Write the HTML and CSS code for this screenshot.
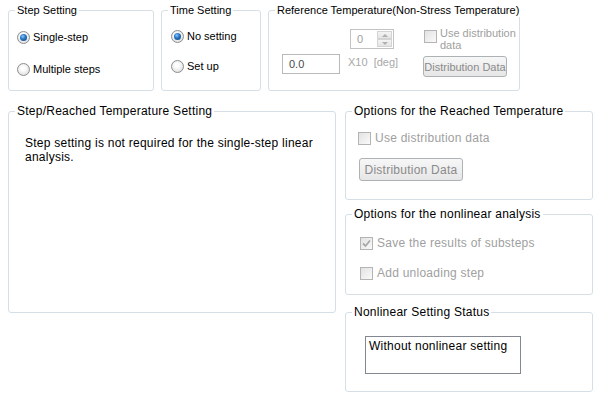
FILE: index.html
```html
<!DOCTYPE html>
<html lang="en">
<head>
    <meta charset="UTF-8">
    <meta name="viewport" content="width=device-width, initial-scale=1.0">
    <title>Thermal Stress Setting</title>
    <link rel="stylesheet" href="styles.css">
</head>
<body>
    <div class="top">
        <fieldset class="group step-box">
            <legend>Step Setting</legend>
            <div class="inner">
                <label class="opt"><span class="radio on"></span>Single-step</label>
                <label class="opt second"><span class="radio"></span>Multiple steps</label>
            </div>
        </fieldset>

        <fieldset class="group time-box">
            <legend>Time Setting</legend>
            <div class="inner">
                <label class="opt"><span class="radio on"></span>No setting</label>
                <label class="opt second"><span class="radio"></span>Set up</label>
            </div>
        </fieldset>

        <fieldset class="group ref-box">
            <legend>Reference Temperature(Non-Stress Temperature)</legend>
            <div class="inner ref-grid">
                <div></div>
                <div class="spin">
                    <span class="spin-val">0</span>
                    <span class="spin-btns">
                        <span class="spin-up"></span>
                        <span class="spin-down"></span>
                    </span>
                </div>
                <label class="opt dis top-check"><span class="check"></span><span>Use distribution<br>data</span></label>

                <div class="textbox">0.0</div>
                <div class="unit">X10&nbsp;&nbsp;[deg]</div>
                <button class="btn small" disabled>Distribution Data</button>
            </div>
        </fieldset>
    </div>

    <div class="bottom">
        <fieldset class="group big reached-box">
            <legend>Step/Reached Temperature Setting</legend>
            <div class="inner">
                <p class="note">Step setting is not required for the single-step linear analysis.</p>
            </div>
        </fieldset>

        <div class="side">
            <fieldset class="group big opt-reached">
                <legend>Options for the Reached Temperature</legend>
                <div class="inner">
                    <label class="opt dis"><span class="check"></span>Use distribution data</label>
                    <button class="btn wide" disabled>Distribution Data</button>
                </div>
            </fieldset>

            <fieldset class="group big opt-nonlin">
                <legend>Options for the nonlinear analysis</legend>
                <div class="inner">
                    <label class="opt dis"><span class="check">
                        <svg width="11" height="11" viewBox="0 0 11 11"><path d="M2 5.5 L4.5 8 L9 2.5" fill="none" stroke="#a8a8a8" stroke-width="1.8"/></svg>
                    </span>Save the results of substeps</label>
                    <label class="opt dis second"><span class="check"></span>Add unloading step</label>
                </div>
            </fieldset>

            <fieldset class="group big status-box">
                <legend>Nonlinear Setting Status</legend>
                <div class="inner">
                    <div class="status">Without nonlinear setting</div>
                </div>
            </fieldset>
        </div>
    </div>
</body>
</html>
```

FILE: styles.css
```css
body{
    margin: 0;
    background: #ffffff;
    font-family: "Liberation Sans", Arial, sans-serif;
    font-size: 11px;
    color: #000000;
}

.group{
    box-sizing: border-box;
    margin: 0;
    padding: 0;
    border: 1px solid #d5dfe5;
    border-radius: 3px;
    min-width: 0;
}
.group legend{
    margin-left: 6px;
    padding: 0 2px;
    line-height: 14px;
    white-space: nowrap;
}
.group.big{
    font-size: 12px;
    letter-spacing: 0.25px;
}

.top{
    display: flex;
    gap: 7px;
    padding: 3px 0 0 8px;
}
.step-box{
    width: 146px;
    height: 88px;
}
.step-box .inner{
    padding: 13px 0 0 8px;
}
.time-box{
    width: 100px;
    height: 88px;
}
.time-box .inner{
    padding: 12px 0 0 9px;
}
.ref-box{
    width: 252px;
    height: 88px;
}
.ref-box .inner{
    padding: 12px 0 0 13px;
}

.opt{
    display: flex;
    align-items: center;
    gap: 3px;
    height: 14px;
    line-height: 14px;
    white-space: nowrap;
}
.step-box .second{
    margin-top: 18px;
}
.time-box .second{
    margin-top: 16px;
}
.dis{
    color: #a0a0a0;
    gap: 4px;
}

.radio{
    box-sizing: border-box;
    flex: none;
    width: 13px;
    height: 13px;
    border: 1px solid #8b8d8f;
    border-radius: 50%;
    background: radial-gradient(circle at 45% 40%, #ffffff 20%, #d3d3d3 100%);
    display: flex;
    align-items: center;
    justify-content: center;
}
.radio.on::after{
    content: "";
    width: 7px;
    height: 7px;
    border-radius: 50%;
    background: radial-gradient(circle at 40% 35%, #8cc8ff 0%, #2a78c8 40%, #0b3c73 100%);
}

.check{
    box-sizing: border-box;
    flex: none;
    width: 13px;
    height: 13px;
    border: 1px solid #b4b4b4;
    background: linear-gradient(135deg, #e2e2e2, #fafafa);
    display: flex;
    align-items: center;
    justify-content: center;
}

/* reference temperature */
.ref-grid{
    display: grid;
    grid-template-columns: 66px 75px 84px;
    grid-template-rows: 20px 23px;
    row-gap: 5px;
}
.spin{
    box-sizing: border-box;
    width: 44px;
    height: 20px;
    margin-left: 2px;
    border: 1px solid #c2c2c2;
    display: flex;
    align-items: center;
    justify-content: space-between;
    padding: 0 1px 0 6px;
    color: #a0a0a0;
}
.spin-btns{
    display: flex;
    flex-direction: column;
    width: 15px;
    height: 16px;
}
.spin-up,
.spin-down{
    flex: 1;
    box-sizing: border-box;
    border: 1px solid #d4d4d4;
    background: linear-gradient(#f4f4f4, #e4e4e4);
    display: flex;
    align-items: center;
    justify-content: center;
}
.spin-up::after{
    content: "";
    border-left: 3px solid transparent;
    border-right: 3px solid transparent;
    border-bottom: 3px solid #b0b0b0;
}
.spin-down::after{
    content: "";
    border-left: 3px solid transparent;
    border-right: 3px solid transparent;
    border-top: 3px solid #b0b0b0;
}
.top-check{
    height: auto;
    align-items: flex-start;
    gap: 3px;
    line-height: 12px;
    margin-top: -2px;
    margin-left: 1px;
}
.top-check .check{
    margin-top: 3px;
}
.textbox{
    box-sizing: border-box;
    width: 58px;
    height: 20px;
    border: 1px solid #b9b9b9;
    padding-left: 6px;
    line-height: 18px;
    color: #4a4a4a;
}
.unit{
    color: #a8a8a8;
    line-height: 16px;
}

.btn{
    box-sizing: border-box;
    font-family: inherit;
    color: #8a8a8a;
    border: 1px solid #adb2b5;
    border-radius: 3px;
    background: linear-gradient(#f7f7f7, #e6e6e6);
    padding: 0;
}
.btn.small{
    width: 84px;
    height: 21px;
    margin-top: 2px;
    font-size: 11px;
}
.btn.wide{
    width: 104px;
    height: 23px;
    margin: 13px 0 0 1px;
    font-size: 12px;
    letter-spacing: 0.25px;
    display: block;
}

/* lower half */
.bottom{
    display: flex;
    gap: 9px;
    padding: 13px 0 0 8px;
}
.reached-box{
    width: 328px;
    height: 209px;
}
.reached-box .inner{
    padding: 18px 0 0 16px;
}
.note{
    margin: 0;
    line-height: 14px;
    width: 300px;
}
.side{
    display: flex;
    flex-direction: column;
}
.opt-reached{
    width: 248px;
    height: 96px;
}
.opt-reached .inner{
    padding: 13px 0 0 12px;
}
.opt-nonlin{
    width: 248px;
    height: 88px;
    margin-top: 7px;
}
.opt-nonlin .inner{
    padding: 15px 0 0 14px;
}
.opt-nonlin .second{
    margin-top: 16px;
}
.status-box{
    width: 248px;
    height: 87px;
    margin-top: 10px;
}
.status-box .inner{
    padding: 17px 0 0 19px;
}
.status{
    box-sizing: border-box;
    width: 156px;
    height: 38px;
    border: 1px solid #828790;
    padding: 2px 0 0 3px;
    line-height: 14px;
}
```
